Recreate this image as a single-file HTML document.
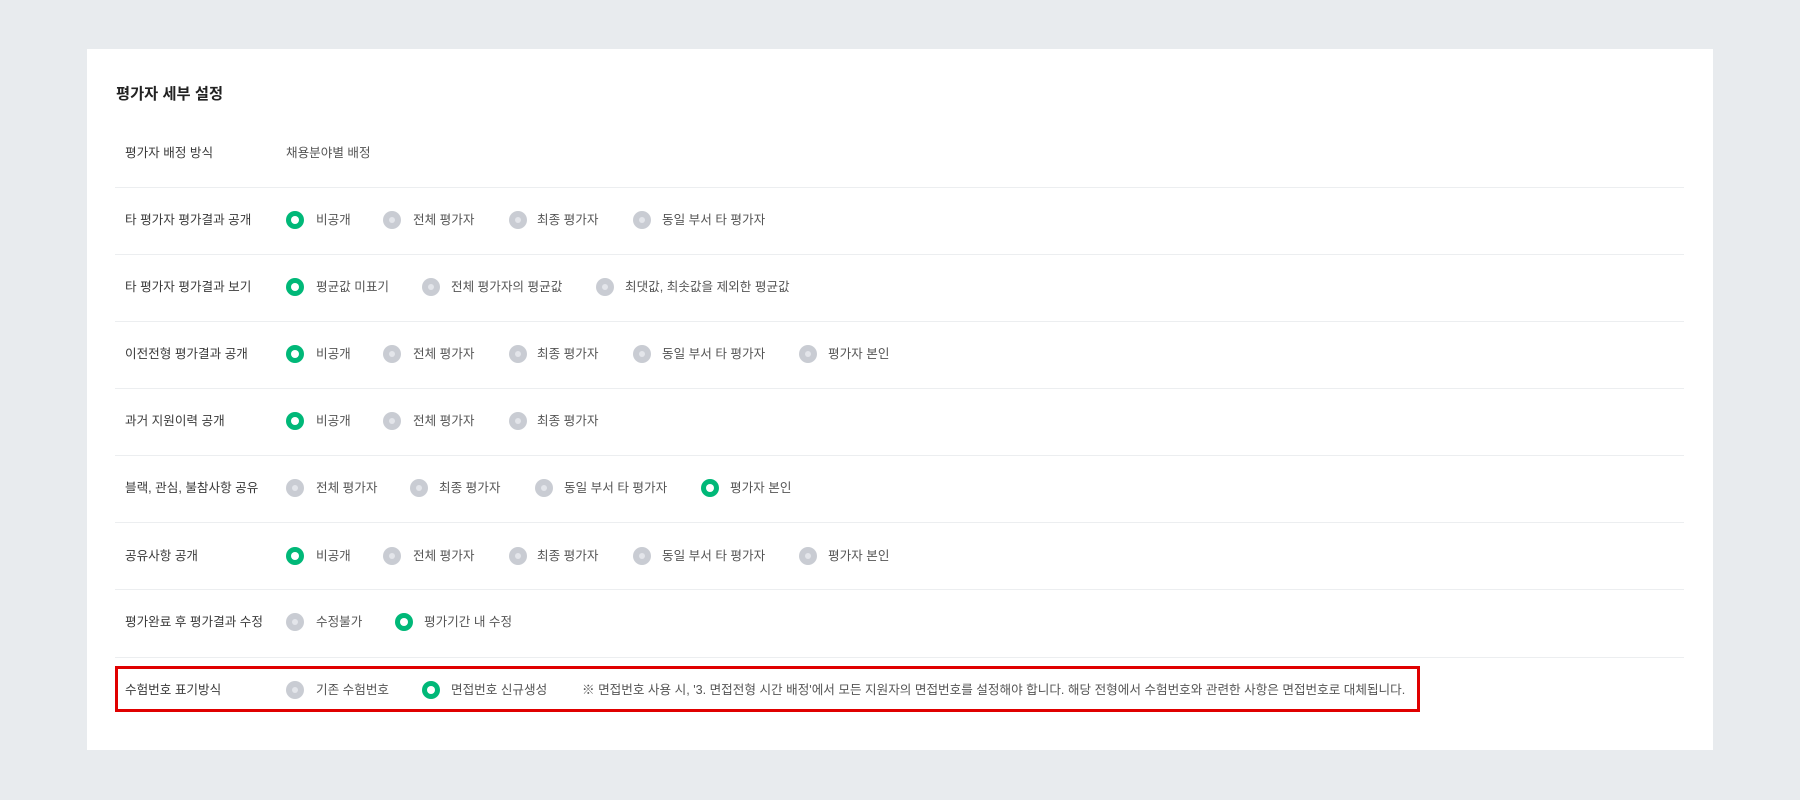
<!DOCTYPE html>
<html><head><meta charset="utf-8"><style>
body{margin:0;width:1800px;height:800px;background:#e8ebee;font-family:"Liberation Sans","Noto Sans CJK KR",sans-serif;position:relative;overflow:hidden}
.card{position:absolute;left:87px;top:49px;width:1626px;height:701px;background:#fff}
.t{position:absolute;left:116px;top:82px;font-size:15.3px;font-weight:bold;color:#222}
.row{position:absolute;left:0;width:1800px;height:0}
.lab{position:absolute;left:125px;top:-9px;font-size:12.6px;color:#3a3a3a;white-space:nowrap;line-height:18px}
.o{position:absolute;top:-9px;font-size:12.6px;color:#555;white-space:nowrap;line-height:18px}
.r{position:absolute;top:-9px;width:18px;height:18px;border-radius:50%;background:#c9ccd3}
.r::after{content:"";position:absolute;left:6px;top:6px;width:6px;height:6px;border-radius:50%;background:#e3e5ea}
.r.on{background:#00b878}
.r.on::after{background:#fff;left:5px;top:5px;width:8px;height:8px}
.sep{position:absolute;left:115px;width:1569px;height:1px;background:#eceef0}
.box{position:absolute;left:115px;top:666px;width:1299px;height:40px;border:3px solid #e00000}
</style></head><body>
<div class="card"></div>
<div class="t">평가자 세부 설정</div>
<div class="sep" style="top:187px"></div><div class="sep" style="top:254px"></div><div class="sep" style="top:321px"></div><div class="sep" style="top:388px"></div><div class="sep" style="top:455px"></div><div class="sep" style="top:522px"></div><div class="sep" style="top:589px"></div><div class="sep" style="top:657px"></div>
<div class="box"></div>

<div class="row" style="top:153px"><div class="lab">평가자 배정 방식</div><div class="o" style="left:286px">채용분야별 배정</div></div>

<div class="row" style="top:220px"><div class="lab">타 평가자 평가결과 공개</div>
<div class="r on" style="left:286px"></div><div class="o" style="left:316px">비공개</div>
<div class="r" style="left:383px"></div><div class="o" style="left:413px">전체 평가자</div>
<div class="r" style="left:509px"></div><div class="o" style="left:537px">최종 평가자</div>
<div class="r" style="left:633px"></div><div class="o" style="left:662px">동일 부서 타 평가자</div></div>

<div class="row" style="top:287px"><div class="lab">타 평가자 평가결과 보기</div>
<div class="r on" style="left:286px"></div><div class="o" style="left:316px">평균값 미표기</div>
<div class="r" style="left:422px"></div><div class="o" style="left:451px">전체 평가자의 평균값</div>
<div class="r" style="left:596px"></div><div class="o" style="left:625px">최댓값, 최솟값을 제외한 평균값</div></div>

<div class="row" style="top:354px"><div class="lab">이전전형 평가결과 공개</div>
<div class="r on" style="left:286px"></div><div class="o" style="left:316px">비공개</div>
<div class="r" style="left:383px"></div><div class="o" style="left:413px">전체 평가자</div>
<div class="r" style="left:509px"></div><div class="o" style="left:537px">최종 평가자</div>
<div class="r" style="left:633px"></div><div class="o" style="left:662px">동일 부서 타 평가자</div>
<div class="r" style="left:799px"></div><div class="o" style="left:828px">평가자 본인</div></div>

<div class="row" style="top:421px"><div class="lab">과거 지원이력 공개</div>
<div class="r on" style="left:286px"></div><div class="o" style="left:316px">비공개</div>
<div class="r" style="left:383px"></div><div class="o" style="left:413px">전체 평가자</div>
<div class="r" style="left:509px"></div><div class="o" style="left:537px">최종 평가자</div></div>

<div class="row" style="top:488px"><div class="lab">블랙, 관심, 불참사항 공유</div>
<div class="r" style="left:286px"></div><div class="o" style="left:316px">전체 평가자</div>
<div class="r" style="left:410px"></div><div class="o" style="left:439px">최종 평가자</div>
<div class="r" style="left:535px"></div><div class="o" style="left:564px">동일 부서 타 평가자</div>
<div class="r on" style="left:701px"></div><div class="o" style="left:730px">평가자 본인</div></div>

<div class="row" style="top:556px"><div class="lab">공유사항 공개</div>
<div class="r on" style="left:286px"></div><div class="o" style="left:316px">비공개</div>
<div class="r" style="left:383px"></div><div class="o" style="left:413px">전체 평가자</div>
<div class="r" style="left:509px"></div><div class="o" style="left:537px">최종 평가자</div>
<div class="r" style="left:633px"></div><div class="o" style="left:662px">동일 부서 타 평가자</div>
<div class="r" style="left:799px"></div><div class="o" style="left:828px">평가자 본인</div></div>

<div class="row" style="top:622px"><div class="lab">평가완료 후 평가결과 수정</div>
<div class="r" style="left:286px"></div><div class="o" style="left:316px">수정불가</div>
<div class="r on" style="left:395px"></div><div class="o" style="left:424px">평가기간 내 수정</div></div>

<div class="row" style="top:690px"><div class="lab">수험번호 표기방식</div>
<div class="r" style="left:286px"></div><div class="o" style="left:316px">기존 수험번호</div>
<div class="r on" style="left:422px"></div><div class="o" style="left:451px">면접번호 신규생성</div>
<div class="o" style="left:582px">※ 면접번호 사용 시, '3. 면접전형 시간 배정'에서 모든 지원자의 면접번호를 설정해야 합니다. 해당 전형에서 수험번호와 관련한 사항은 면접번호로 대체됩니다.</div></div>
</body></html>
